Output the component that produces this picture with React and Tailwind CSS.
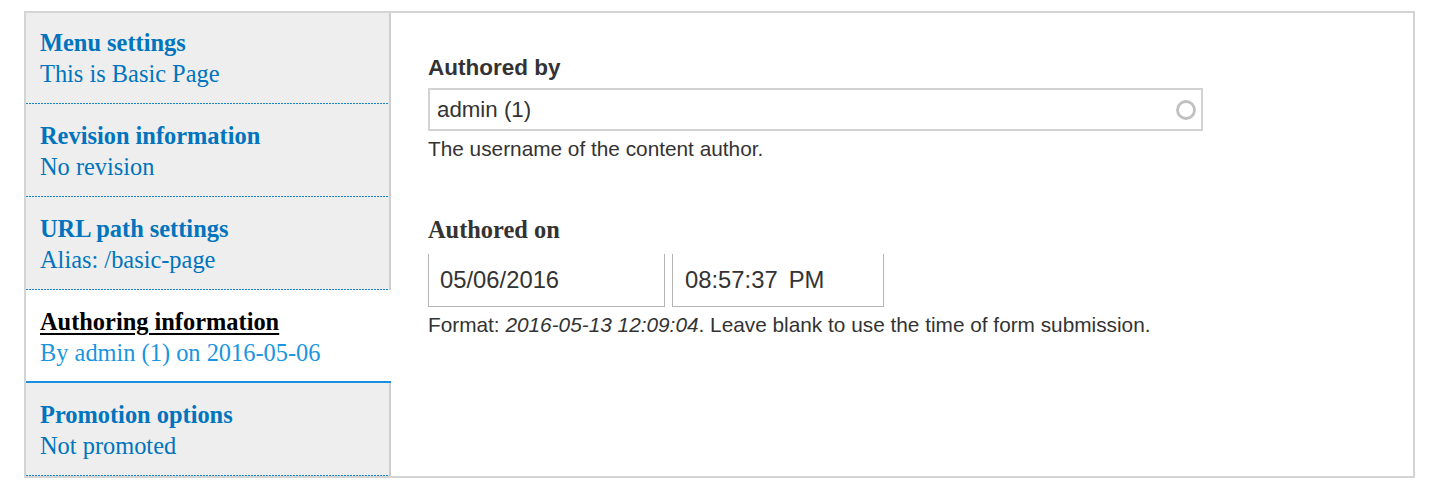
import { useState } from 'react';

const TABS = [
  { title: 'Menu settings', summary: 'This is Basic Page' },
  { title: 'Revision information', summary: 'No revision' },
  { title: 'URL path settings', summary: 'Alias: /basic-page' },
  { title: 'Authoring information', summary: 'By admin (1) on 2016-05-06' },
  { title: 'Promotion options', summary: 'Not promoted' },
];

const serif = "font-['Liberation_Serif',serif]";
const sans = "font-['Liberation_Sans',Arial,sans-serif]";

const App = () => {
  const [active, setActive] = useState(3);

  return (
    <div className="min-h-screen bg-white pt-[11px] pl-[24px]">
      <div className="flex w-[1391px] border-2 border-[#d4d4d4] bg-white">

        {/* Vertical tab menu */}
        <ul className={`w-[365px] shrink-0 border-r-2 border-[#cdcdcd] bg-[#eeeeee] ${serif}`}>
          {TABS.map((tab, i) => {
            const isActive = i === active;
            return (
              <li
                key={tab.title}
                onClick={() => setActive(i)}
                className={`cursor-pointer ${isActive ? 'mr-[-2px] bg-white' : ''}`}
              >
                <div
                  className={`pl-[14px] text-[24.4px] leading-[31px] ${
                    i === 0 ? 'pt-[14px]' : 'pt-[16px]'
                  } ${isActive ? 'pb-[13px]' : 'pb-[14px]'}`}
                >
                  <div
                    className={`font-bold ${
                      isActive ? 'text-black underline decoration-[2px] underline-offset-[3px]' : 'text-[#0074bd]'
                    }`}
                  >
                    {tab.title}
                  </div>
                  <div className={isActive ? 'text-[#1a95e0]' : 'text-[#0074bd]'}>{tab.summary}</div>
                </div>
                {isActive ? (
                  <div className="h-[2px] bg-[#1a8fdd]" />
                ) : (
                  <div className="h-px bg-[repeating-linear-gradient(to_right,#1683cc_0px,#1683cc_2px,transparent_2px,transparent_3px)]" />
                )}
              </li>
            );
          })}
        </ul>

        {/* Tab pane */}
        <div className={`flex-1 pl-[37px] pt-[42px] text-[#333] ${sans}`}>
          <label className="block text-[22.5px] font-bold leading-[26px]">Authored by</label>
          <div className="relative mt-[7px] flex h-[43px] w-[775px] items-center border-2 border-[#d2d2d2] pl-[7px] text-[22.3px]">
            admin (1)
            <svg className="absolute right-[4px] top-1/2 -translate-y-1/2" width="22" height="22" viewBox="0 0 22 22">
              <circle cx="11" cy="11" r="8.5" fill="none" stroke="#c0c0c0" strokeWidth="2.8" />
            </svg>
          </div>
          <p className="mt-[6px] text-[20.8px] leading-[24px]">The username of the content author.</p>

          <label className={`mt-[55px] block text-[24.4px] font-bold leading-[28px] ${serif}`}>Authored on</label>
          <div className="mt-[10px] flex gap-[7px]">
            <div className="flex h-[53px] w-[237px] items-center border-x border-b border-[#b4b4b4] pl-[11px] text-[23.8px]">
              05/06/2016
            </div>
            <div className="flex h-[53px] w-[212px] items-center border-x border-b border-[#b4b4b4] pl-[12px] text-[23.8px]">
              08:57:37<span className="ml-[11px]">PM</span>
            </div>
          </div>
          <p className="mt-[6px] text-[20.8px] leading-[24px]">
            Format: <em>2016-05-13 12:09:04</em>. Leave blank to use the time of form submission.
          </p>
        </div>
      </div>
    </div>
  );
};

export default App;
